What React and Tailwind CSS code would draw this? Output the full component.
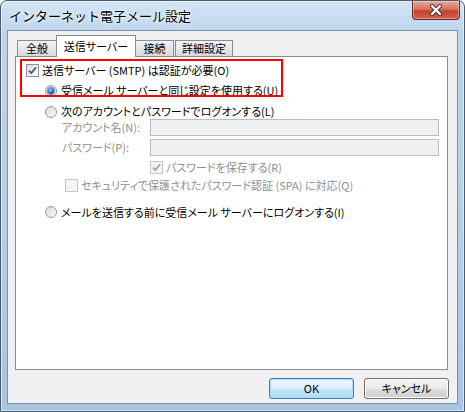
import React from 'react';

const Checkbox = ({ checked, disabled }) => (
  <span
    className={`w-[13px] h-[13px] shrink-0 flex items-center justify-center border ${
      disabled ? 'border-[#c5c5c5] bg-[#f4f4f4]' : 'border-[#8e8f8f] bg-[linear-gradient(135deg,#dcdcdc,#ffffff)]'
    }`}
  >
    {checked && (
      <svg width="11" height="11" viewBox="0 0 11 11">
        <path
          d="M2 5.6 L4.3 8.2 L9 2.4"
          fill="none"
          stroke={disabled ? '#a8a8a8' : '#4a5f97'}
          strokeWidth="1.9"
          strokeLinejoin="round"
        />
      </svg>
    )}
  </span>
);

const Radio = ({ checked }) => (
  <span className="w-[12px] h-[12px] shrink-0 rounded-full border border-[#9a9a9a] bg-[linear-gradient(135deg,#d8d8d8,#fbfbfb)] flex items-center justify-center">
    {checked && (
      <span className="w-[6px] h-[6px] rounded-full bg-[radial-gradient(circle_at_40%_35%,#a9dcff,#2a72c0_45%,#0b2f5e)] shadow-[0_0_0_1px_#5a8fc7]" />
    )}
  </span>
);

const Tab = ({ label, active, className = '' }) =>
  active ? (
    <div
      className={`relative z-10 -mb-px h-[22px] w-[80px] bg-white border border-b-0 border-[#898c95] flex items-center justify-center ${className}`}
    >
      {label}
    </div>
  ) : (
    <div
      className={`h-[16px] border border-b-0 border-[#898c95] bg-[linear-gradient(#f3f3f3,#e6e6e6_50%,#d9d9d9)] flex items-center justify-center ${className}`}
    >
      {label}
    </div>
  );

export default function App() {
  const dim = 'text-[#8f8f8f]';

  return (
    <div className="w-[465px] h-[412px] overflow-hidden font-['Noto_Sans_CJK_JP','Noto_Sans',sans-serif] leading-none text-black">
      <div className="h-full flex flex-col rounded-t-[7px] border border-[#4c5a6b] bg-[linear-gradient(#d3e5f6,#bcd4ec_8%,#b4cde8_60%,#a8c4e3)] shadow-[inset_0_0_0_1px_rgba(255,255,255,0.55)]">
        {/* TITLE BAR */}
        <div className="h-[29px] flex items-start justify-between">
          <span className="pl-[8px] pt-[8px] text-[13px] [text-shadow:0_0_6px_#fff,0_0_3px_#fff]">
            インターネット電子メール設定
          </span>
          <div className="mr-[4px] w-[48px] h-[19px] rounded-b-[4px] border border-t-0 border-[#6b2a22] bg-[linear-gradient(#e9a797,#d8735f_45%,#c2432d_55%,#d2604b)] shadow-[inset_0_0_0_1px_rgba(255,255,255,0.35)] flex items-center justify-center">
            <svg width="14" height="12" viewBox="0 0 14 12">
              <path d="M3 2 L11 10 M11 2 L3 10" stroke="#3b3b3b" strokeWidth="4" strokeLinecap="round" />
              <path d="M3 2 L11 10 M11 2 L3 10" stroke="#ffffff" strokeWidth="2.2" strokeLinecap="round" />
            </svg>
          </div>
        </div>

        {/* CLIENT AREA */}
        <div className="mx-[6px] mb-[7px] flex-1 border border-[#7d90a6] bg-[#f0f0f0] flex flex-col text-[11px] [font-feature-settings:'palt']">
          {/* TABS */}
          <div className="ml-[9px] pt-[4px] h-[25px] flex items-end">
            <Tab label="全般" className="w-[40px]" />
            <Tab label="送信サーバー" active className="-ml-px -mr-px" />
            <Tab label="接続" className="w-[39px]" />
            <Tab label="詳細設定" className="ml-[1px] w-[58px]" />
          </div>

          {/* PANEL */}
          <div className="relative ml-[7px] mr-[9px] h-[314px] bg-white border border-[#898c95] pt-[4px] flex flex-col">
            <div className="h-[19px] pl-[10px] flex items-center gap-[3px]">
              <Checkbox checked />
              <span>送信サーバー (SMTP) は認証が必要(O)</span>
            </div>
            <div className="h-[21px] pl-[29px] flex items-center gap-[4px]">
              <Radio checked />
              <span>受信メール サーバーと同じ設定を使用する(U)</span>
            </div>
            <div className="h-[21px] pl-[29px] flex items-center gap-[4px]">
              <Radio />
              <span>次のアカウントとパスワードでログオンする(L)</span>
            </div>
            <div className="-mt-[3px] h-[17px] pl-[46px] flex items-center">
              <span className={`w-[88px] ${dim}`}>アカウント名(N):</span>
              <div className="w-[289px] h-full border border-[#b5bfcb] bg-[#f0f0f0]" />
            </div>
            <div className="mt-[3px] h-[17px] pl-[46px] flex items-center">
              <span className={`w-[88px] ${dim}`}>パスワード(P):</span>
              <div className="w-[289px] h-full border border-[#b5bfcb] bg-[#f0f0f0]" />
            </div>
            <div className="mt-[2px] h-[18px] pl-[134px] flex items-center gap-[3px]">
              <Checkbox checked disabled />
              <span className={dim}>パスワードを保存する(R)</span>
            </div>
            <div className="h-[18px] pl-[49px] flex items-center gap-[3px]">
              <Checkbox disabled />
              <span className={dim}>セキュリティで保護されたパスワード認証 (SPA) に対応(Q)</span>
            </div>
            <div className="mt-[9px] h-[18px] pl-[29px] flex items-center gap-[4px]">
              <Radio />
              <span>メールを送信する前に受信メール サーバーにログオンする(I)</span>
            </div>

            {/* red highlight box over the first two options */}
            <div className="absolute left-[4px] top-[2px] w-[263px] h-[38px] border-2 border-[#ff0000] pointer-events-none" />
          </div>

          {/* BUTTONS */}
          <div className="mt-[8px] mr-[8px] flex justify-end gap-[10px]">
            <button className="w-[85px] h-[21px] rounded-[3px] border border-[#3c7fb1] bg-[linear-gradient(#ecf7fd,#dbf0fc_50%,#c2e4f7_51%,#b5dcf3)] shadow-[inset_0_0_0_1px_#a9dcf6] flex items-center justify-center">
              OK
            </button>
            <button className="w-[85px] h-[21px] rounded-[3px] border border-[#707070] bg-[linear-gradient(#f2f2f2,#ebebeb_50%,#dddddd_51%,#cfcfcf)] shadow-[inset_0_0_0_1px_#fcfcfc] flex items-center justify-center">
              キャンセル
            </button>
          </div>
        </div>
      </div>
    </div>
  );
}
